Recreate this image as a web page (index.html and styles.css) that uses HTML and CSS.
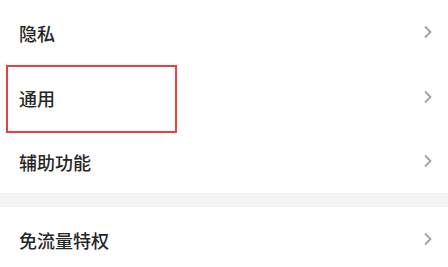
FILE: index.html
```html
<html>
  <head>
    <title>设置</title>
    <link rel="stylesheet" href="styles.css">
  </head>
  <body>
    <div class="list">
      <div class="row">
        <div class="label">隐私</div>
        <svg class="arrow" width="10" height="14" viewBox="0 0 10 14"><polyline points="2,1.5 7.5,7 2,12.5"/></svg>
      </div>
      <div class="row marked">
        <div class="label">通用</div>
        <svg class="arrow" width="10" height="14" viewBox="0 0 10 14"><polyline points="2,1.5 7.5,7 2,12.5"/></svg>
        <div class="mark"></div>
      </div>
      <div class="row">
        <div class="label">辅助功能</div>
        <svg class="arrow" width="10" height="14" viewBox="0 0 10 14"><polyline points="2,1.5 7.5,7 2,12.5"/></svg>
      </div>
    </div>
    <div class="gap"></div>
    <div class="list">
      <div class="row">
        <div class="label">免流量特权</div>
        <svg class="arrow" width="10" height="14" viewBox="0 0 10 14"><polyline points="2,1.5 7.5,7 2,12.5"/></svg>
      </div>
    </div>
  </body>
</html>
```
FILE: styles.css
```css
body {
  margin: 0;
  background: #fff;
  font-family: "Noto Sans CJK SC", "Noto Sans", sans-serif;
  overflow: hidden;
}
.row {
  position: relative;
  height: 65px;
  display: flex;
  align-items: center;
  padding: 0 15px 0 19px;
}
.row:nth-child(3) {
  height: 63px;
}
.label {
  flex: 1;
  font-size: 18px;
  font-weight: 500;
  color: #262626;
}
.arrow {
  margin-top: -2px;
}
.arrow polyline {
  fill: none;
  stroke: #a0a0a0;
  stroke-width: 1.8;
}
.gap {
  height: 14px;
  background: #f4f4f4;
}
.mark {
  position: absolute;
  left: 6px;
  top: 0;
  width: 167px;
  height: 64px;
  border: 2px solid #e8403f;
}
```
